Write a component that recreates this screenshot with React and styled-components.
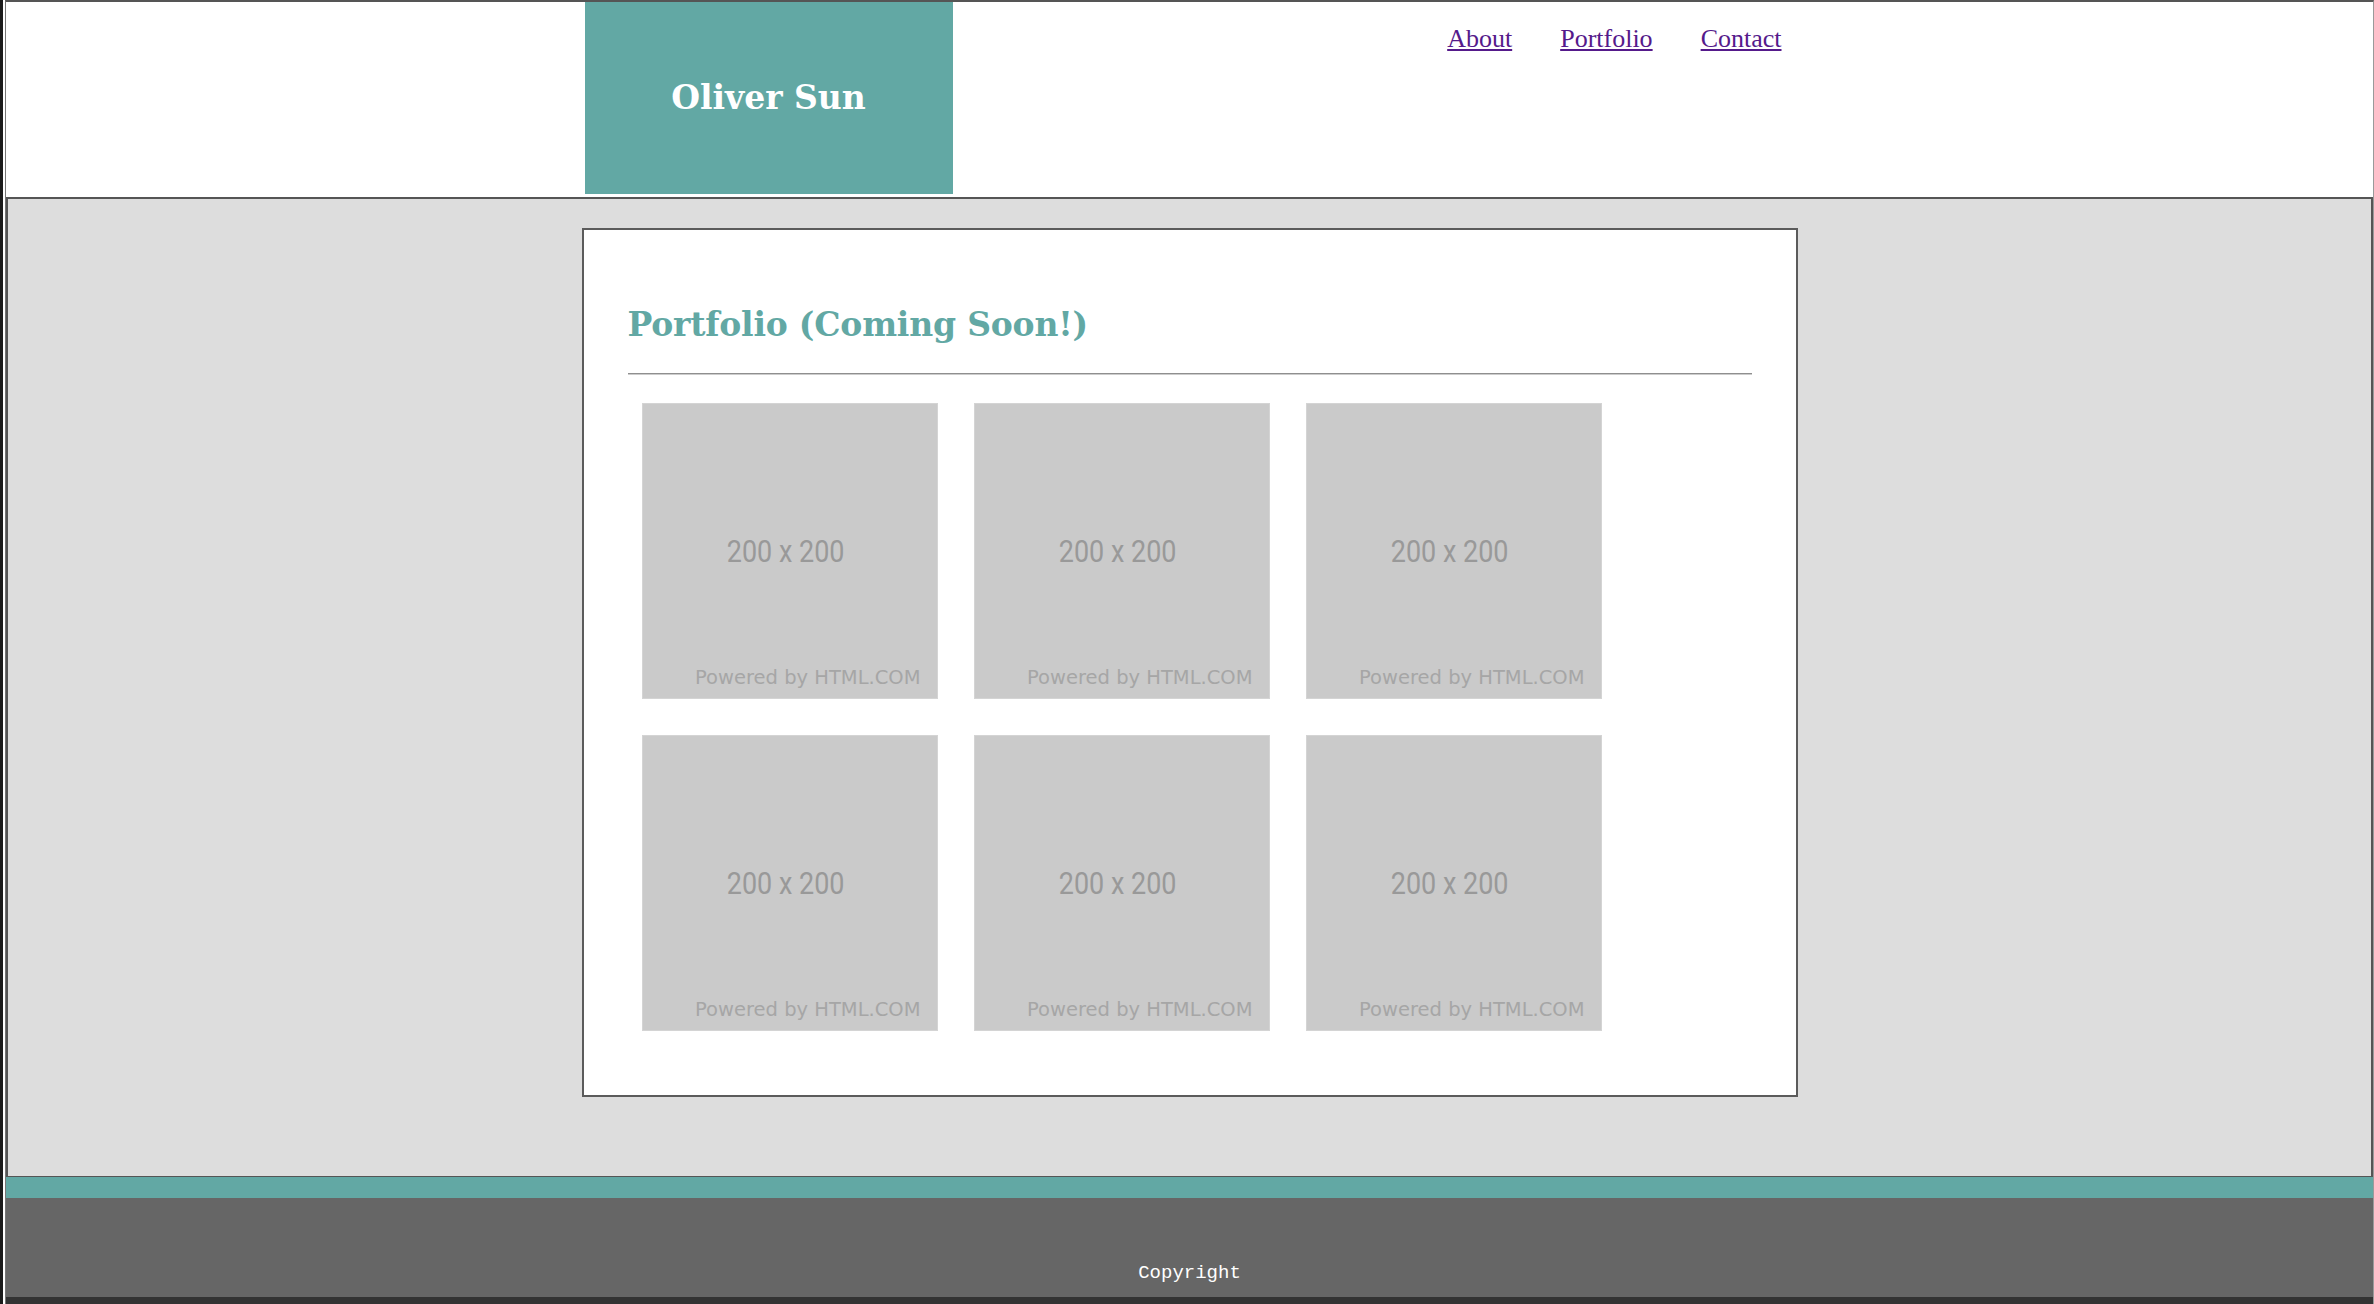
import React from 'react';
import styled, { createGlobalStyle } from 'styled-components';

const GlobalStyle = createGlobalStyle`
  html, body {
    margin: 0;
    padding: 0;
    background: #ffffff;
  }
`;

const Frame = styled.div`
  height: 1304px;
  box-sizing: border-box;
  border-left: 3px solid #1b1b1b;
  padding-left: 2px;
  overflow: hidden;
`;

const Page = styled.div`
  height: 100%;
  box-sizing: border-box;
  display: flex;
  flex-direction: column;
  border-top: 2px solid #555555;
  border-left: 1px solid #777777;
  border-right: 1px solid #9a9a9a;
`;

const Header = styled.header`
  height: 195px;
  flex-shrink: 0;
  background: #ffffff;
  display: flex;
  justify-content: center;
`;

const HeaderInner = styled.div`
  width: 1216px;
  display: flex;
  align-items: flex-start;
`;

const Logo = styled.div`
  width: 368px;
  height: 192px;
  margin-left: 3px;
  background: #62a8a4;
  display: flex;
  align-items: center;
  justify-content: center;
  padding-bottom: 2px;
  box-sizing: border-box;
  color: #ffffff;
  font-family: Georgia, "DejaVu Serif", serif;
  font-weight: bold;
  font-size: 33px;
`;

const Nav = styled.nav`
  margin-left: auto;
  margin-right: 16px;
  padding-top: 22px;
  display: flex;
  gap: 48px;
`;

const NavLink = styled.a`
  font-family: "Liberation Serif", serif;
  font-size: 26px;
  color: #551a8b;
  text-decoration: underline;
`;

const Main = styled.main`
  height: 977px;
  flex-shrink: 0;
  background: #dddddd;
  border: 2px solid #555555;
  border-bottom-width: 1px;
  display: flex;
  justify-content: center;
  align-items: flex-start;
`;

const Card = styled.section`
  width: 1216px;
  box-sizing: border-box;
  margin-top: 29px;
  background: #ffffff;
  border: 2px solid #5b5b5b;
  padding: 75px 44px 64px;
`;

const Title = styled.h2`
  margin: 0;
  font-family: Georgia, "DejaVu Serif", serif;
  font-weight: bold;
  font-size: 33px;
  letter-spacing: -0.2px;
  line-height: 40px;
  color: #62a8a4;
`;

const Rule = styled.hr`
  margin: 28px 0 0;
  height: 0;
  border: 0;
  border-top: 1px solid #8f8f8f;
  border-bottom: 1px solid #cccccc;
`;

const Gallery = styled.div`
  margin-top: 28px;
  padding-left: 14px;
  display: grid;
  grid-template-columns: repeat(3, 296px);
  column-gap: 36px;
  row-gap: 36px;
`;

const Tile = styled.div`
  position: relative;
  width: 296px;
  height: 296px;
  box-sizing: border-box;
  background: #cacaca;
  border: 1px solid #d4d4d4;
  display: flex;
  align-items: center;
  justify-content: center;
  padding-right: 7px;
`;

const Size = styled.span`
  display: inline-block;
  font-family: Roboto, "Liberation Sans", sans-serif;
  font-size: 31px;
  color: #999999;
  transform: scaleX(0.87);
`;

const Powered = styled.span`
  position: absolute;
  right: 16px;
  bottom: 9px;
  font-family: "DejaVu Sans", sans-serif;
  font-size: 19.5px;
  color: #a6a6a6;
`;

const Footer = styled.footer`
  flex: 1;
  display: flex;
  flex-direction: column;
`;

const Stripe = styled.div`
  height: 21px;
  background: #62a8a4;
`;

const FooterBody = styled.div`
  flex: 1;
  background: #666666;
  padding-top: 64px;
  text-align: center;
  font-family: "Liberation Mono", monospace;
  font-size: 19px;
  color: #ffffff;
`;

const BottomBar = styled.div`
  height: 7px;
  background: #333333;
`;

const tiles = [1, 2, 3, 4, 5, 6];

const App = () => {
  return (
    <>
      <GlobalStyle />
      <Frame>
        <Page>
          <Header>
            <HeaderInner>
              <Logo>Oliver Sun</Logo>
              <Nav>
                <NavLink href="#about">About</NavLink>
                <NavLink href="#portfolio">Portfolio</NavLink>
                <NavLink href="#contact">Contact</NavLink>
              </Nav>
            </HeaderInner>
          </Header>
          <Main>
            <Card>
              <Title>Portfolio (Coming Soon!)</Title>
              <Rule />
              <Gallery>
                {tiles.map((n) => (
                  <Tile key={n}>
                    <Size>200 x 200</Size>
                    <Powered>Powered by HTML.COM</Powered>
                  </Tile>
                ))}
              </Gallery>
            </Card>
          </Main>
          <Footer>
            <Stripe />
            <FooterBody>Copyright</FooterBody>
            <BottomBar />
          </Footer>
        </Page>
      </Frame>
    </>
  );
};

export default App;
